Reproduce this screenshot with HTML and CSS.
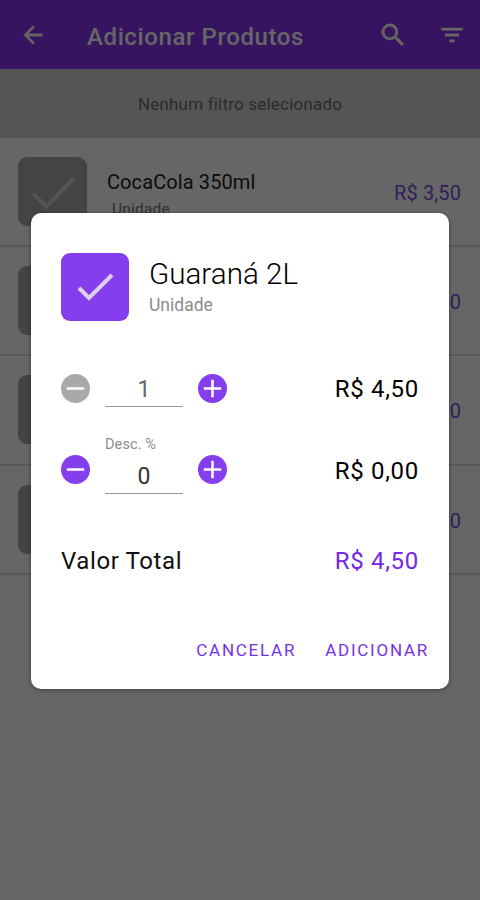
FILE: index.html
```html
<!DOCTYPE html>
<html lang="pt-BR">
<head>
    <meta charset="UTF-8">
    <meta name="viewport" content="width=device-width, initial-scale=1.0">
    <title>Adicionar Produtos</title>
    <link rel="stylesheet" href="styles.css">
</head>
<body>
    <header class="toolbar">
        <svg class="icon back" viewBox="0 0 24 24"><path d="M20 11H7.83l5.59-5.59L12 4l-8 8 8 8 1.41-1.41L7.83 13H20v-2z"/></svg>
        <h1>Adicionar Produtos</h1>
        <svg class="icon search" viewBox="0 0 24 24"><path d="M15.5 14h-.79l-.28-.27A6.471 6.471 0 0 0 16 9.5 6.5 6.5 0 1 0 9.5 16c1.61 0 3.09-.59 4.23-1.57l.27.28v.79l5 4.99L20.49 19l-4.99-5zm-6 0C7.01 14 5 11.99 5 9.5S7.01 5 9.5 5 14 7.01 14 9.5 11.99 14 9.5 14z"/></svg>
        <svg class="icon filter" viewBox="0 0 24 24"><path d="M10 18h4v-2h-4v2zM3 6v2h18V6H3zm3 7h12v-2H6v2z"/></svg>
    </header>

    <p class="filter-bar">Nenhum filtro selecionado</p>

    <ul class="products">
        <li class="product">
            <div class="tile"><svg viewBox="0 0 68 68"><path d="M15 36l13 13 27-28"/></svg></div>
            <div class="info">
                <p class="name">CocaCola 350ml</p>
                <p class="unit">Unidade</p>
            </div>
            <span class="price">R$ 3,50</span>
        </li>
        <li class="product">
            <div class="tile"></div>
            <span class="price">R$ 4,50</span>
        </li>
        <li class="product">
            <div class="tile"></div>
            <span class="price">R$ 4,50</span>
        </li>
        <li class="product">
            <div class="tile"></div>
            <span class="price">R$ 4,50</span>
        </li>
    </ul>

    <div class="overlay">
        <div class="dialog">
            <div class="dialog-header">
                <div class="tile selected"><svg viewBox="0 0 68 68"><path d="M18 35l10 10 23-23"/></svg></div>
                <div>
                    <h2>Guaraná 2L</h2>
                    <p class="dialog-unit">Unidade</p>
                </div>
            </div>

            <div class="row quantity">
                <button class="round disabled"><svg viewBox="0 0 30 30"><path d="M6 15h18"/></svg></button>
                <div class="field muted">1</div>
                <button class="round"><svg viewBox="0 0 30 30"><path d="M6 15h18M15 6v18"/></svg></button>
                <span class="amount">R$ 4,50</span>
            </div>

            <div class="field-label">Desc. %</div>
            <div class="row discount">
                <button class="round"><svg viewBox="0 0 30 30"><path d="M6 15h18"/></svg></button>
                <div class="field">0</div>
                <button class="round"><svg viewBox="0 0 30 30"><path d="M6 15h18M15 6v18"/></svg></button>
                <span class="amount">R$ 0,00</span>
            </div>

            <div class="row total">
                <span class="total-label">Valor Total</span>
                <span class="amount">R$ 4,50</span>
            </div>

            <div class="actions">
                <button>CANCELAR</button>
                <button>ADICIONAR</button>
            </div>
        </div>
    </div>
</body>
</html>
```
FILE: styles.css
```css
* {
    box-sizing: border-box;
    margin: 0;
    padding: 0;
}
body {
    font-family: Roboto, sans-serif;
    height: 900px;
    background: #fff;
    overflow: hidden;
}
button {
    font-family: inherit;
    border: none;
    background: none;
}

/* Toolbar */
.toolbar {
    display: flex;
    align-items: center;
    height: 69px;
    padding: 0 14px 0 19px;
    background: #8732ee;
    color: #fff;
}
.toolbar h1 {
    flex: 1;
    margin-left: 40px;
    padding-top: 4px;
    font-size: 24px;
    font-weight: 500;
    letter-spacing: 0.6px;
}
.icon {
    width: 28px;
    height: 28px;
    fill: #fff;
    stroke: #fff;
    stroke-width: 0.4;
}
.icon.search {
    width: 30px;
    height: 30px;
}
.icon.filter {
    margin-left: 30px;
}

.filter-bar {
    height: 69px;
    line-height: 71px;
    text-align: center;
    font-size: 17px;
    letter-spacing: 0.2px;
    color: #6c6c6c;
    background: #d4d4d4;
}

/* Product list */
.products {
    list-style: none;
}
.product {
    display: flex;
    align-items: center;
    height: 109.2px;
    padding: 0 19px 0 18px;
    border-bottom: 2px solid #dcdcdc;
}
.tile {
    width: 69px;
    height: 69px;
    border-radius: 9px;
    background: #aaa;
}
.tile svg {
    display: block;
    fill: none;
    stroke: #d2d2d2;
    stroke-width: 4;
}
.info {
    margin-left: 20px;
    padding-top: 6px;
}
.name {
    font-size: 20px;
    line-height: 24px;
    letter-spacing: 0.1px;
    color: #222;
}
.unit {
    margin: 5px 0 0 5px;
    font-size: 15.5px;
    line-height: 20px;
    letter-spacing: 0.2px;
    color: #777;
}
.price {
    margin-left: auto;
    padding-top: 3px;
    font-size: 20px;
    letter-spacing: 0.1px;
    color: #7a50e0;
}

/* Dialog */
.overlay {
    position: absolute;
    inset: 0;
    display: flex;
    justify-content: center;
    align-items: flex-start;
    padding-top: 213px;
    background: rgba(0, 0, 0, 0.6);
}
.dialog {
    width: 418px;
    height: 476px;
    padding: 40px 30px 0;
    border-radius: 10px;
    background: #fff;
    box-shadow: 0 1px 4px rgba(0, 0, 0, 0.4);
}
.dialog-header {
    display: flex;
    gap: 20px;
    height: 69px;
}
.tile.selected {
    width: 68px;
    height: 68px;
    background: #843eee;
}
.tile.selected svg {
    stroke: #dcd2e8;
}
h2 {
    margin-top: 3px;
    font-size: 29.6px;
    line-height: 36px;
    font-weight: 300;
    color: #000;
}
.dialog-unit {
    margin-top: 2px;
    font-size: 17.5px;
    line-height: 22px;
    color: #8c8c8c;
}
.row {
    display: flex;
    align-items: center;
}
.quantity {
    margin-top: 48px;
    height: 36px;
}
.round {
    width: 29px;
    height: 29px;
    border-radius: 50%;
    background: #843eee;
}
.round.disabled {
    background: #a9a9a9;
}
.round svg {
    display: block;
    fill: none;
    stroke: #fff;
    stroke-width: 2.6;
}
.field {
    width: 78px;
    height: 37px;
    margin: 0 15px;
    padding-top: 2px;
    border-bottom: 1.5px solid #999;
    line-height: 35px;
    text-align: center;
    font-size: 23px;
    color: #333;
}
.field.muted {
    color: #666;
}
.amount {
    margin-left: auto;
    padding-top: 2px;
    font-size: 24px;
    letter-spacing: 0.7px;
    color: #000;
}
.field-label {
    margin: 30px 0 0 44px;
    font-size: 14.5px;
    line-height: 18px;
    letter-spacing: 0.1px;
    color: #8c8c8c;
}
.discount {
    align-items: flex-start;
    height: 40px;
    padding-top: 1px;
}
.discount .field {
    margin-top: 2px;
}
.discount .amount {
    padding-top: 2px;
}
.total {
    margin-top: 51px;
    height: 30px;
}
.total-label {
    padding-top: 2px;
    font-size: 24px;
    font-weight: 450;
    letter-spacing: 0.6px;
    color: #111;
}
.total .amount {
    color: #7428e6;
}
.actions {
    display: flex;
    justify-content: flex-end;
    gap: 29px;
    margin: 64px -12px 0 0;
    padding-right: 2px;
}
.actions button {
    font-size: 17px;
    font-weight: 450;
    line-height: 22px;
    letter-spacing: 1.75px;
    color: #7730e6;
}
```
